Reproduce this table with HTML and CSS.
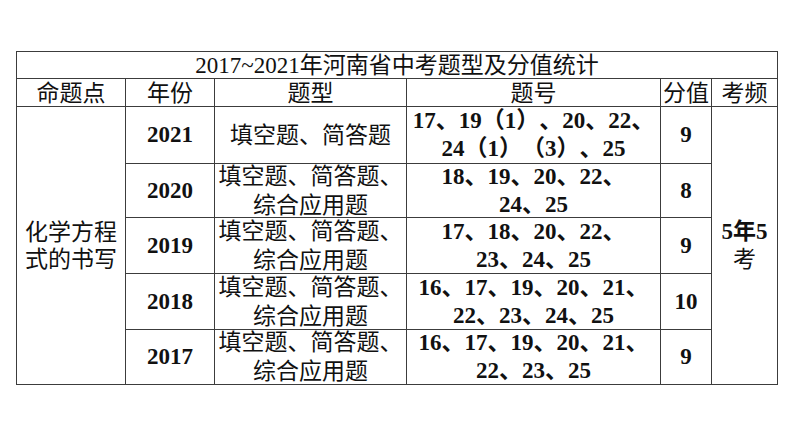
FILE: index.html
```html
<!DOCTYPE html>
<html lang="zh-CN">
<head>
<meta charset="utf-8">
<title>2017~2021年河南省中考题型及分值统计</title>
<link rel="stylesheet" href="styles.css">
</head>
<body>
<div class="page">
  <div class="stat-table">
    <div class="cell title"><div class="txt">2017~2021年河南省中考题型及分值统计</div></div>

    <div class="cell head"><div class="txt">命题点</div></div>
    <div class="cell head"><div class="txt">年份</div></div>
    <div class="cell head"><div class="txt">题型</div></div>
    <div class="cell head"><div class="txt">题号</div></div>
    <div class="cell head"><div class="txt">分值</div></div>
    <div class="cell head"><div class="txt">考频</div></div>

    <div class="cell topic"><div class="txt">化学方程<br>式的书写</div></div>

    <div class="cell year"><div class="txt">2021</div></div>
    <div class="cell kind"><div class="txt">填空题、简答题</div></div>
    <div class="cell nums"><div class="txt">17、19（1）、20、22、<br>24（1）（3）、25</div></div>
    <div class="cell score"><div class="txt">9</div></div>

    <div class="cell freq"><div class="txt"><span class="freq-strong">5年5</span><br>考</div></div>

    <div class="cell year"><div class="txt">2020</div></div>
    <div class="cell kind"><div class="txt">填空题、简答题、<br>综合应用题</div></div>
    <div class="cell nums"><div class="txt">18、19、20、22、<br>24、25</div></div>
    <div class="cell score"><div class="txt">8</div></div>

    <div class="cell year"><div class="txt">2019</div></div>
    <div class="cell kind"><div class="txt">填空题、简答题、<br>综合应用题</div></div>
    <div class="cell nums"><div class="txt">17、18、20、22、<br>23、24、25</div></div>
    <div class="cell score"><div class="txt">9</div></div>

    <div class="cell year"><div class="txt">2018</div></div>
    <div class="cell kind"><div class="txt">填空题、简答题、<br>综合应用题</div></div>
    <div class="cell nums"><div class="txt">16、17、19、20、21、<br>22、23、24、25</div></div>
    <div class="cell score"><div class="txt">10</div></div>

    <div class="cell year"><div class="txt">2017</div></div>
    <div class="cell kind"><div class="txt">填空题、简答题、<br>综合应用题</div></div>
    <div class="cell nums"><div class="txt">16、17、19、20、21、<br>22、23、25</div></div>
    <div class="cell score"><div class="txt">9</div></div>
  </div>
</div>
</body>
</html>
```

FILE: styles.css
```css
html, body {
  margin: 0;
  padding: 0;
  background: #ffffff;
}

.page {
  padding: 51px 0 0 16px;
}

.stat-table {
  display: grid;
  grid-template-columns: 109px 89px 192px 254px 51px 66px;
  grid-template-rows: 27px 28px 57px 54px 56px 56px 55px;
  width: max-content;
  border-left: 1px solid #3c3c3c;
  border-top: 1px solid #3c3c3c;
  font-family: "Liberation Serif", "Noto Sans CJK SC", serif;
  font-size: 23px;
  color: #111;
  text-spacing-trim: space-all;
}

.cell {
  box-sizing: border-box;
  border-right: 1px solid #3c3c3c;
  border-bottom: 1px solid #3c3c3c;
  display: flex;
  align-items: center;
  justify-content: center;
  text-align: center;
  white-space: nowrap;
  line-height: 28px;
}

.title {
  grid-column: 1 / 7;
  padding-top: 2px;
}

.head {
  padding-top: 2px;
}

.topic {
  grid-column: 1;
  grid-row: 3 / 8;
  line-height: 27px;
}

.freq {
  grid-column: 6;
  grid-row: 3 / 8;
}

.freq-strong {
  font-weight: 700;
}

.year {
  font-weight: 700;
}

.kind {
  line-height: 29px;
}

.nums {
  font-weight: 700;
}

.score {
  font-weight: 700;
}
```
